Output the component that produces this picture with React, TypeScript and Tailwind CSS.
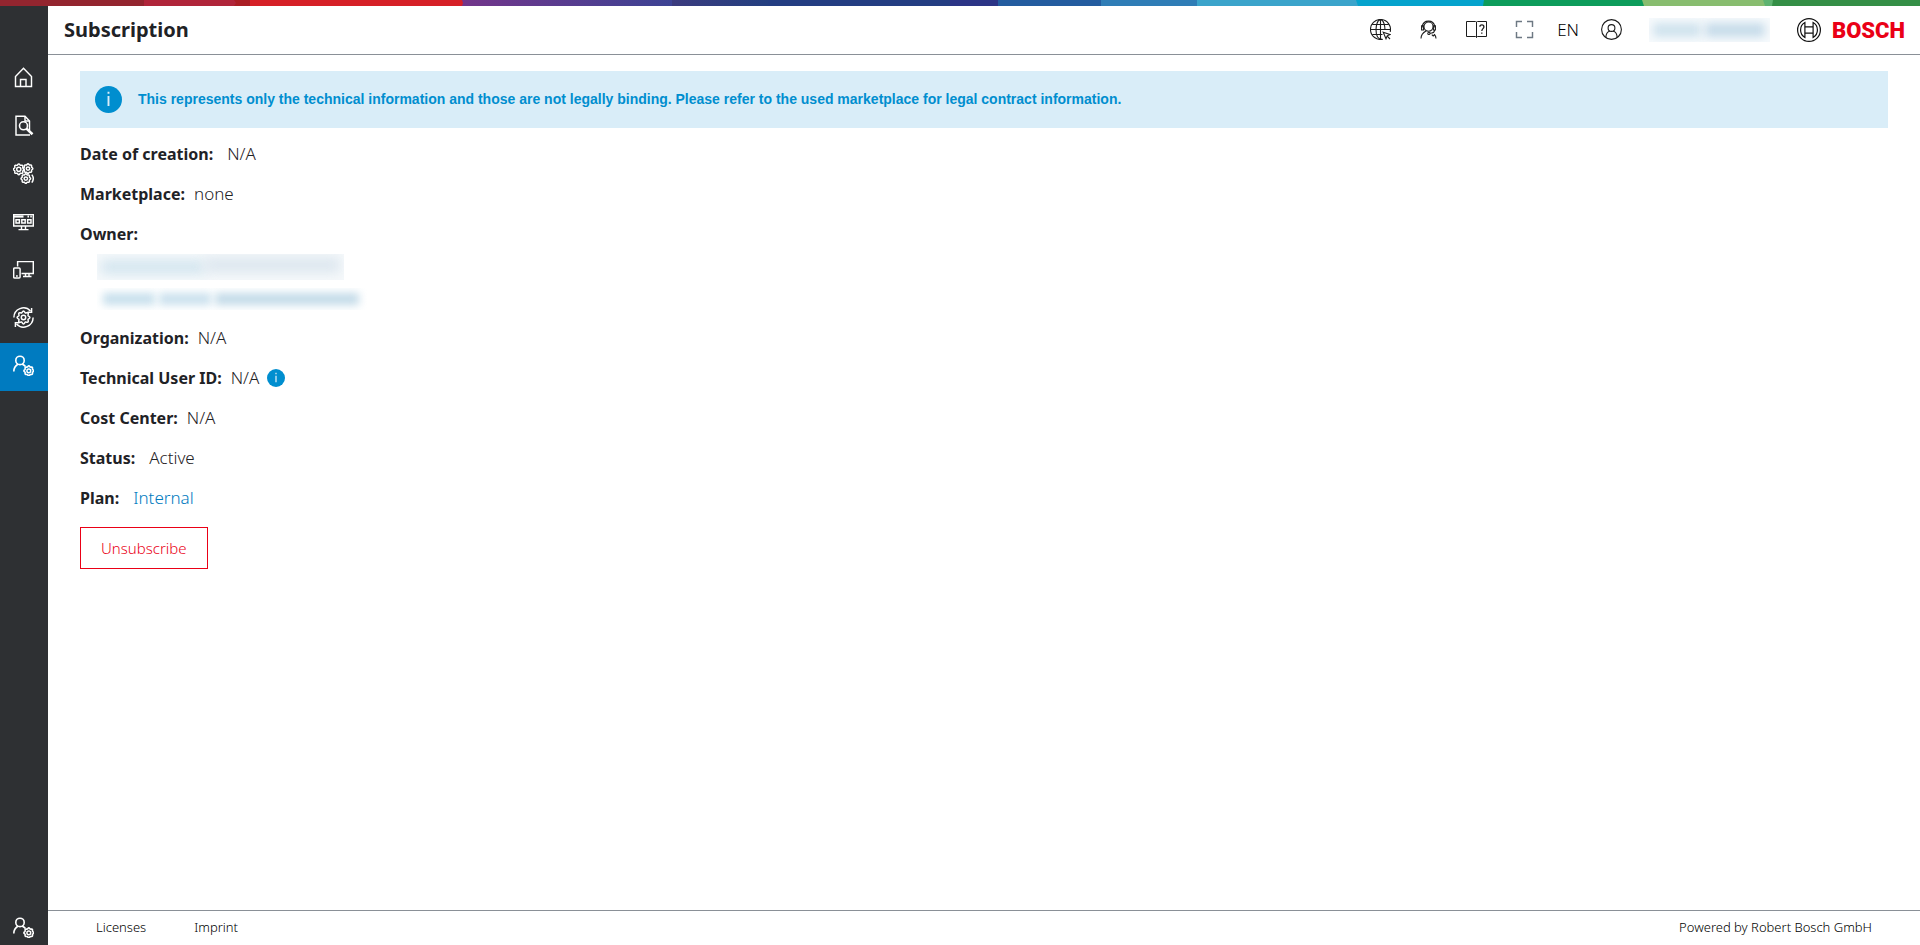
import React from "react";

type IconProps = { className?: string; children: React.ReactNode };

function Icon({ className = "size-[21px]", children }: IconProps) {
  return (
    <svg viewBox="0 0 21 21" fill="none" stroke="currentColor" strokeWidth="1.45" className={className} aria-hidden="true">
      {children}
    </svg>
  );
}

function gearPath(cx: number, cy: number, teeth: number, outer: number, inner: number) {
  const steps = teeth * 8;
  const points: string[] = [];
  for (let i = 0; i < steps; i++) {
    const a = (i / steps) * Math.PI * 2;
    const wave = (Math.cos(a * teeth) + 1) / 2;
    const r = inner + (outer - inner) * wave;
    points.push(`${(cx + r * Math.cos(a)).toFixed(2)} ${(cy + r * Math.sin(a)).toFixed(2)}`);
  }
  return `M${points.join("L")}Z`;
}

const HomeIcon = () => (
  <Icon>
    <path d="M2.5 19.5V9.5L10.5 1.2L18.5 9.5V19.5Z" />
    <path d="M7.5 19.5V12.5H13V19.5" />
  </Icon>
);

const SearchDocIcon = () => (
  <Icon>
    <path d="M16.5 15.5V6L12 1.2H3V20H17" />
    <path d="M12 1.2V6H16.5" />
    <circle cx="10.5" cy="10.8" r="4" strokeWidth="1.6" />
    <path d="M13.5 13.6L19.5 19.2" strokeWidth="2.6" />
  </Icon>
);

const GearsIcon = () => (
  <Icon>
    <path d={gearPath(5.8, 6.3, 8, 5.4, 4.3)} />
    <circle cx="5.8" cy="6.3" r="2.1" />
    <path d={gearPath(15, 5.6, 8, 4.8, 3.9)} />
    <circle cx="15" cy="5.6" r="1.7" />
    <path d={gearPath(12.8, 15.6, 8, 4.8, 3.9)} />
    <circle cx="12.8" cy="15.6" r="1.7" />
    <path d="M18.8 11.6C20.6 13.8 20.6 17 18.8 19.6" />
  </Icon>
);

const DashboardIcon = () => (
  <Icon>
    <path d="M0.7 3.6H20.3V15H0.7Z" />
    <path d="M1 5.5H10.5" strokeWidth="2.2" />
    <path d="M14.5 5.5H16M17.3 5.5H18.8" strokeWidth="1.8" />
    <path d="M3 8.8H6.4V12H3ZM8.8 8.8H12.2V12H8.8ZM14.6 8.8H18V12H14.6Z" />
    <path d="M8.5 15V18M12.5 15V18M5.5 18.6H15.5" />
  </Icon>
);

const DevicesIcon = () => (
  <Icon>
    <path d="M4.6 7.5V2.6H20.3V14.4H8.5" />
    <path d="M12.5 14.4V17M16 14.4V17M10 17.4H18.5" />
    <rect x="0.7" y="9" width="6.4" height="10" rx="1" />
    <path d="M3 16.9H4.8" />
  </Icon>
);

const CycleGearIcon = () => (
  <Icon>
    <path d={gearPath(10.5, 10.5, 8, 6.4, 4.9)} />
    <circle cx="10.5" cy="10.5" r="2.2" />
    <path d="M0.9 10.5A9.6 9.6 0 0 1 17.5 3.9" />
    <path d="M20.1 10.5A9.6 9.6 0 0 1 3.5 17.1" />
    <path d="M18.6 1V5.2H14.4M2.4 20V15.8H6.6" />
  </Icon>
);

const UserGearIcon = () => (
  <Icon>
    <circle cx="7" cy="5.4" r="4.2" strokeWidth="1.6" />
    <path d="M0.8 16.4C0.8 12.6 2.6 10.6 5 9M9 9C10.6 9.8 11.8 10.6 12.4 11.4" strokeWidth="1.6" />
    <path d={gearPath(15.8, 15.8, 8, 4.9, 4)} strokeWidth="1.6" />
    <circle cx="15.8" cy="15.8" r="1.9" />
  </Icon>
);

const GlobeIcon = () => (
  <Icon>
    <g strokeWidth="1.1">
      <path d="M12.8 20.2A10 10 0 1 1 20.2 12.8" />
      <path d="M12 20.4C7 20.4 6 14 6 10.5S7.4 0.6 10.5 0.6S15 7 15 11" />
      <path d="M10.5 0.5V20.5M0.5 10.5H20.5M2.2 5.5H18.8M2.2 15.5H12.5" />
      <path d="M13.2 13.2L20 15.6L17.2 16.8L16 19.8Z" fill="white" />
      <path d="M17.2 17.2L20 20" />
    </g>
  </Icon>
);

const HeadsetIcon = () => (
  <Icon>
    <g strokeWidth="1.1">
      <path d="M4.2 8.6V7.4A6.4 6.4 0 0 1 16.8 7.4V8.6" />
      <circle cx="10.5" cy="7.6" r="4.6" />
      <path d="M3.6 6.8H5.6V11H3.6ZM15.4 6.8H17.4V11H15.4Z" />
      <path d="M16.5 11C16.5 13.5 14.5 14.3 12 14.3" />
      <circle cx="10.9" cy="14.4" r="1.1" />
      <path d="M3 19.5C3 15.8 5 13.6 8 12M13.8 15.6L15.2 17L16.6 15.6C17.6 16.8 18 18 18 19.5" />
    </g>
  </Icon>
);

const HelpBookIcon = () => (
  <Icon>
    <g strokeWidth="1">
      <path d="M0.5 2.5H9.5L10.5 3L11.5 2.5H20.5V17.5H11.5L10.5 18.5L9.5 17.5H0.5Z" />
      <path d="M10.5 3V18.5" />
      <path d="M13.9 7.8C13.9 5.2 17.9 5.2 17.9 7.9C17.9 9.6 15.8 9.8 15.8 12M15.8 13.4V14.8" strokeWidth="1.3" />
    </g>
  </Icon>
);

const FullscreenIcon = () => (
  <Icon className="size-[21px] text-[#6d7883]">
    <path d="M2.5 8V2.5H8M13 2.5H18.5V8M18.5 13V18.5H13M8 18.5H2.5V13" />
  </Icon>
);

const ProfileIcon = () => (
  <Icon>
    <g strokeWidth="1.1">
      <circle cx="10.5" cy="10.5" r="9.9" />
      <circle cx="10.5" cy="9" r="3.4" />
      <path d="M4.9 18.3C4.9 14.6 6.6 12.8 8.9 12M12.1 12C14.4 12.8 16.1 14.6 16.1 18.3" />
    </g>
  </Icon>
);

const InfoIcon = ({ className }: { className: string }) => (
  <svg viewBox="0 0 27 27" className={className} aria-hidden="true">
    <circle cx="13.5" cy="13.5" r="13.5" fill="#008ecf" />
    <path d="M13.5 10V20M13.5 5.8V7.8" stroke="#d9edf8" strokeWidth="1.9" />
  </svg>
);

const BoschMark = () => (
  <svg viewBox="0 0 24 24" fill="none" stroke="#111" strokeWidth="1.2" className="size-6" aria-hidden="true">
    <circle cx="12" cy="12" r="11.4" />
    <path d="M7.9 4.6A8.5 8.5 0 0 0 7.9 19.4Z" />
    <path d="M16.1 4.6A8.5 8.5 0 0 1 16.1 19.4Z" />
    <path d="M7.9 8.8H16.1M7.9 15.2H16.1" />
  </svg>
);

function ColorStripe() {
  return (
    <svg viewBox="0 0 1920 6" preserveAspectRatio="none" className="block h-1.5 w-full shrink-0" aria-hidden="true">
      <defs>
        <linearGradient id="violet">
          <stop offset="0" stopColor="#73358a" />
          <stop offset="1" stopColor="#3c4394" />
        </linearGradient>
        <linearGradient id="navy">
          <stop offset="0" stopColor="#3b3b7e" />
          <stop offset="1" stopColor="#233f80" />
        </linearGradient>
      </defs>
      <path d="M0 0H1920V6H0Z" fill="#348f46" />
      <path d="M0 0H1773L1772 6H0Z" fill="#5eb370" />
      <path d="M0 0H1763L1765 6H0Z" fill="#88bd6f" />
      <path d="M0 0H1642L1644 6H0Z" fill="#0d9c5b" />
      <path d="M0 0H1484L1483 6H0Z" fill="#05a3cd" />
      <path d="M0 0H1356L1358 6H0Z" fill="#3ba4cb" />
      <path d="M0 0H1197V6H0Z" fill="#2f7db6" />
      <path d="M0 0H1101V6H0Z" fill="#235c9f" />
      <path d="M0 0H998V6H0Z" fill="#2b3486" />
      <path d="M0 0H950V6H0Z" fill="#233d82" />
      <path d="M672 0H768V6H672Z" fill="url(#navy)" />
      <path d="M462 0H672V6H462Z" fill="url(#violet)" />
      <path d="M0 0H462L463 3L462 6H0Z" fill="#d62027" />
      <path d="M0 0H250V6H0Z" fill="#aa1e24" />
      <path d="M0 0H234L236 3L234 6H0Z" fill="#b0253a" />
      <path d="M0 0H144V6H0Z" fill="#93252f" />
    </svg>
  );
}

const navItems = [
  { label: "Home", icon: <HomeIcon /> },
  { label: "Search", icon: <SearchDocIcon /> },
  { label: "Processes", icon: <GearsIcon /> },
  { label: "Dashboard", icon: <DashboardIcon /> },
  { label: "Devices", icon: <DevicesIcon /> },
  { label: "Operations", icon: <CycleGearIcon /> },
  { label: "Subscription", icon: <UserGearIcon />, active: true },
];

function Sidebar() {
  return (
    <nav className="flex w-12 shrink-0 flex-col bg-[#2e3033] pt-[49px] text-white">
      {navItems.map((item) => (
        <a
          key={item.label}
          href="#"
          aria-label={item.label}
          className={
            item.active
              ? "flex h-12 items-center justify-center bg-[#007bc0] pr-px pb-[3px]"
              : "flex h-12 items-center justify-center pr-px pb-[3px]"
          }
        >
          {item.icon}
        </a>
      ))}
      <a href="#" aria-label="Account" className="mt-auto flex h-9 items-center justify-center pr-px">
        <UserGearIcon />
      </a>
    </nav>
  );
}

function Header() {
  return (
    <header className="flex h-[49px] shrink-0 items-center border-b border-[#8a9097] pl-4 pr-[15px] pb-px">
      <h1 className="text-[20px] font-bold text-[#1f2226]">Subscription</h1>
      <div className="ml-auto flex items-center gap-[27px] text-[#1c1c1c]">
        <button aria-label="Web"><GlobeIcon /></button>
        <button aria-label="Support"><HeadsetIcon /></button>
        <button aria-label="Help"><HelpBookIcon /></button>
        <div className="flex items-center gap-[22px]">
          <button aria-label="Full screen"><FullscreenIcon /></button>
          <button className="text-[17px] font-light text-black">EN</button>
          <button aria-label="Profile"><ProfileIcon /></button>
        </div>
        <div className="flex h-6 w-[121px] items-center gap-1 overflow-hidden bg-[#f8fbfd] px-1">
          <span className="h-3.5 w-12 bg-[#cfe2ed] blur-[5px]" />
          <span className="h-3.5 w-15 bg-[#c6dbe9] blur-[5px]" />
        </div>
        <a href="#" className="flex items-center gap-[11px]">
          <BoschMark />
          <span className="pt-0.5 font-[Roboto,sans-serif] text-[22px] font-black leading-6 text-[#ea0016]">BOSCH</span>
        </a>
      </div>
    </header>
  );
}

function Field({ label, wide, children }: { label: string; wide?: boolean; children?: React.ReactNode }) {
  return (
    <div className={wide ? "flex h-10 items-center gap-3.5" : "flex h-10 items-center gap-[9px]"}>
      <dt className="font-bold">{label}</dt>
      {children && <dd className="flex items-center gap-2 text-[17px] font-light">{children}</dd>}
    </div>
  );
}

export default function App() {
  return (
    <div className="flex min-h-screen flex-col bg-white font-['Noto_Sans',sans-serif] text-base text-[#1f2226]">
      <ColorStripe />
      <div className="flex grow">
        <Sidebar />
        <div className="flex grow flex-col">
          <Header />
          <main className="grow px-8 pt-4">
            <div className="flex h-[57px] items-center gap-4 bg-[#d9edf8] px-[15px]">
              <InfoIcon className="size-[27px] shrink-0" />
              <p className="pb-0.5 font-['Liberation_Sans',Arial,sans-serif] text-sm font-bold text-[#008ecf]">
                This represents only the technical information and those are not legally binding. Please refer to the used marketplace for legal contract information.
              </p>
            </div>
            <dl className="mt-1.5">
              <Field label="Date of creation:" wide>N/A</Field>
              <Field label="Marketplace:">none</Field>
              <Field label="Owner:" />
              <div className="mb-2 flex flex-col gap-2 pl-[17px]">
                <dd className="flex h-[26px] w-[247px] items-center overflow-hidden bg-[#f6f9fb] px-1">
                  <span className="h-3.5 w-26 bg-[#d3e5ef] blur-[6px]" />
                  <span className="mb-1 h-4 w-34 bg-[#dde7ef] blur-[6px]" />
                </dd>
                <dd className="flex h-[22px] w-[270px] items-center gap-1 overflow-hidden px-1.5">
                  <span className="h-3 w-13 bg-[#c6dfec] blur-[4px]" />
                  <span className="h-3 w-13 bg-[#c9e0ed] blur-[4px]" />
                  <span className="h-3 w-36 bg-[#c2dae8] blur-[4px]" />
                </dd>
              </div>
              <Field label="Organization:">N/A</Field>
              <Field label="Technical User ID:">
                N/A
                <InfoIcon className="size-[18px]" />
              </Field>
              <Field label="Cost Center:">N/A</Field>
              <Field label="Status:" wide>Active</Field>
              <Field label="Plan:" wide>
                <a href="#" className="text-[#007bc0]">Internal</a>
              </Field>
            </dl>
            <button className="mt-[9px] h-[42px] border border-[#ea0016] px-5 text-[15px] font-light text-[#ea0016]">Unsubscribe</button>
          </main>
          <footer className="flex h-[35px] items-center justify-between border-t border-[#8a9097] px-12 text-[13px] font-light text-black">
            <div className="flex gap-12">
              <a href="#">Licenses</a>
              <a href="#">Imprint</a>
            </div>
            <span>Powered by Robert Bosch GmbH</span>
          </footer>
        </div>
      </div>
    </div>
  );
}
